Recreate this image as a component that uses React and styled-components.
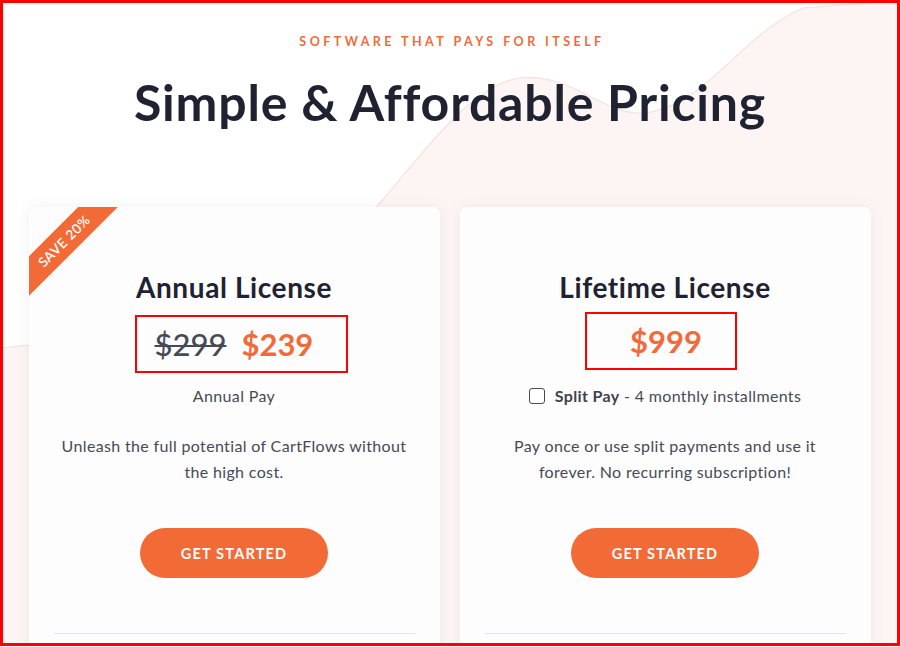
import React from "react";
import styled, { createGlobalStyle } from "styled-components";

const Global = createGlobalStyle`
  html, body { margin: 0; padding: 0; background: #ffffff; }
  body { font-family: Lato, "Open Sans", sans-serif; }
  * { box-sizing: border-box; }
`;

const Frame = styled.div`
  position: relative;
  width: 900px;
  height: 646px;
  border: 3px solid #ff0000;
  overflow: hidden;
  background: #ffffff;
`;

const Backdrop = styled.svg`
  position: absolute;
  inset: 0;
  width: 100%;
  height: 100%;
  z-index: 0;
`;

const Content = styled.main`
  position: relative;
  z-index: 1;
  display: flex;
  flex-direction: column;
  align-items: center;
  padding-top: 31px;
`;

const Eyebrow = styled.div`
  font-family: Lato, sans-serif;
  font-weight: 700;
  font-size: 12.5px;
  letter-spacing: 3.45px;
  color: #f26a3a;
  margin-left: 4px;
`;

const Heading = styled.h1`
  margin: 23px 0 0;
  font-family: Lato, sans-serif;
  font-weight: 700;
  font-size: 50px;
  line-height: 60px;
  color: #1f2231;
  letter-spacing: 0.8px;
`;

const Cards = styled.div`
  display: grid;
  grid-template-columns: 411px 411px;
  gap: 20px;
  margin-top: 75px;
  margin-left: -1px;
`;

const Card = styled.section`
  position: relative;
  background: #fdfdfd;
  border-radius: 7px;
  box-shadow: 0 0 14px rgba(120, 100, 100, 0.09);
  padding: 57px 25px 0;
  height: 460px;
  display: flex;
  flex-direction: column;
  align-items: center;
`;

const RibbonClip = styled.div`
  position: absolute;
  top: 0;
  left: 0;
  width: 120px;
  height: 120px;
  overflow: hidden;
  border-top-left-radius: 7px;
`;

const RibbonBand = styled.div`
  position: absolute;
  left: -36px;
  top: 20px;
  width: 142px;
  height: 28px;
  transform: rotate(-45deg);
  background: #f26a36;
  color: #ffffff;
  font-family: Lato, sans-serif;
  font-size: 13.5px;
  font-weight: 600;
  letter-spacing: 0.5px;
  display: flex;
  align-items: center;
  justify-content: center;
`;

const Title = styled.h2`
  margin: 0;
  font-family: Lato, sans-serif;
  font-weight: 700;
  font-size: 28px;
  line-height: 46px;
  color: #1f2231;
  letter-spacing: 0.6px;
`;

const PriceBox = styled.div`
  margin-top: ${(p) => p.$top}px;
  margin-left: ${(p) => p.$shift}px;
  width: ${(p) => p.$w}px;
  height: 58px;
  border: 2px solid #ff0000;
  display: flex;
  align-items: center;
  padding-left: ${(p) => p.$pad}px;
  gap: 15px;
`;

const Price = styled.span`
  font-family: Lato, sans-serif;
  font-size: 31px;
  color: ${(p) => (p.$old ? "#464a57" : "#f26a3a")};
  text-decoration: ${(p) => (p.$old ? "line-through" : "none")};
  text-decoration-thickness: 2px;
  font-weight: ${(p) => (p.$old ? 500 : 700)};
`;

const Note = styled.div`
  margin-top: ${(p) => p.$top}px;
  font-family: Lato, sans-serif;
  font-size: 16px;
  letter-spacing: 0.35px;
  line-height: 24px;
  color: #474a56;
  display: flex;
  align-items: center;
  gap: 10px;
`;

const Check = styled.span`
  width: 16px;
  height: 16px;
  border: 1.5px solid #4a4a4a;
  border-radius: 3px;
  background: #fff;
  display: inline-block;
`;

const Strong = styled.b`
  font-weight: 700;
  color: #3e414c;
`;

const Desc = styled.p`
  margin: 25px 0 0;
  max-width: 362px;
  text-align: center;
  font-family: Lato, sans-serif;
  font-size: 16px;
  letter-spacing: 0.35px;
  line-height: 26px;
  color: #474a56;
`;

const Button = styled.button`
  margin-top: 43px;
  width: 188px;
  height: 50px;
  border: none;
  border-radius: 25px;
  background: #f26a36;
  color: #ffffff;
  font-family: Lato, sans-serif;
  font-weight: 700;
  font-size: 14.5px;
  letter-spacing: 1.2px;
  cursor: pointer;
`;

const Divider = styled.hr`
  align-self: stretch;
  margin: 55px 0 0;
  border: none;
  border-top: 1px solid #e3e5ed;
`;

export default function App() {
  return (
    <>
      <Global />
      <Frame>
        <Backdrop viewBox="0 0 894 640" preserveAspectRatio="none">
          <path
            d="M-3,345 C150,332 300,290 377,200 C420,150 470,80 517,75 C570,70 600,112 640,110 C700,106 740,30 800,5 L900,-3 L900,650 L-3,650 Z"
            fill="#fcf5f3"
          />
          <path
            d="M-3,345 C150,332 300,290 377,200 C420,150 470,80 517,75 C570,70 600,112 640,110 C700,106 740,30 800,5 L900,-3"
            fill="none"
            stroke="#f9e0da"
            strokeWidth="1.2"
          />
        </Backdrop>
        <Content>
          <Eyebrow>SOFTWARE THAT PAYS FOR ITSELF</Eyebrow>
          <Heading>Simple &amp; Affordable Pricing</Heading>
          <Cards>
            <Card>
              <RibbonClip>
                <RibbonBand>SAVE 20%</RibbonBand>
              </RibbonClip>
              <Title>Annual License</Title>
              <PriceBox $top={5} $shift={14} $w={213} $pad={18}>
                <Price $old>$299</Price>
                <Price>$239</Price>
              </PriceBox>
              <Note $top={11}>Annual Pay</Note>
              <Desc>Unleash the full potential of CartFlows without the high cost.</Desc>
              <Button>GET STARTED</Button>
              <Divider />
            </Card>
            <Card>
              <Title>Lifetime License</Title>
              <PriceBox $top={2} $shift={-8} $w={152} $pad={43}>
                <Price>$999</Price>
              </PriceBox>
              <Note $top={14}>
                <Check />
                <span>
                  <Strong>Split Pay</Strong> - 4 monthly installments
                </span>
              </Note>
              <Desc>Pay once or use split payments and use it forever. No recurring subscription!</Desc>
              <Button>GET STARTED</Button>
              <Divider />
            </Card>
          </Cards>
        </Content>
      </Frame>
    </>
  );
}
